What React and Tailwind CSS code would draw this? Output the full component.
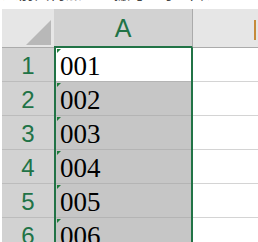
import React from "react";

const rows = ["001", "002", "003", "004", "005", "006"];

export default function App() {
  return (
    <div className="w-[258px] h-[242px] overflow-hidden bg-white">
      <div className="h-[9px] overflow-hidden">
        <div className="mt-[-16px] pl-[2px] text-[16px] leading-[16px] text-[#444] whitespace-nowrap" style={{ fontFamily: '"Noto Sans CJK SC", sans-serif' }}>
          入前面再加一个撇号显示出来
        </div>
      </div>
      <div className="flex pl-[2px] h-[39px] bg-white">
        <div className="w-[52px] h-full bg-[#e6e6e6] border-b border-[#ababab] relative">
          <svg width="52" height="38" className="absolute left-0 top-0">
            <polygon points="49,11 49,36 24,36" fill="#b8b8b8" />
          </svg>
        </div>
        <div className="w-[139px] h-full bg-[#d2d2d2] border-r border-[#ababab] border-b-2 border-b-[#217346] flex items-center justify-center pt-[2px] text-[25px] text-[#217346]" style={{ fontFamily: '"Liberation Sans", sans-serif' }}>
          A
        </div>
        <div className="flex-1 h-full bg-[#e6e6e6] border-b border-[#ababab] flex justify-end items-start pt-[11px] pr-[2px]">
          <div className="w-[2px] h-[20px] bg-[#c58a3a]" />
        </div>
      </div>
      {rows.map((r, i) => (
        <div key={r} className="flex pl-[2px] h-[34px]">
          <div className="w-[52px] h-full bg-[#d2d2d2] border-b border-[#bcbcbc] flex items-center justify-center text-[24px] leading-[24px] text-[#217346] pt-[3px]" style={{ fontFamily: '"Liberation Sans", sans-serif' }}>
            {i + 1}
          </div>
          <div className={`w-[139px] h-full border-x-2 border-[#217346] relative ${i === 0 ? "bg-white" : "bg-[#c6c6c6]"}`}>
            <div className="h-full border-b border-[#b4b4b4] flex items-center pl-[4px] pt-[3px] text-[27px] leading-[27px] text-black" style={{ fontFamily: '"Liberation Serif", serif' }}>
              {r}
            </div>
            <svg width="5" height="5" className="absolute left-[1px] top-[1px]">
              <polygon points="0,0 4,0 0,4" fill="#1e7b3c" />
            </svg>
          </div>
          <div className="flex-1 h-full bg-white border-b border-[#d4d4d4]" />
        </div>
      ))}
    </div>
  );
}
